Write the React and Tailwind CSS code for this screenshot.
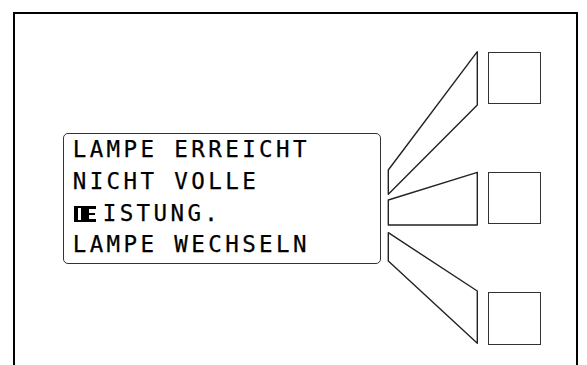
export default function App() {
  return (
    <div className="w-[587px] h-[365px] overflow-hidden bg-white">
      <div className="ml-[13px] mt-[12px] w-[565px] h-[420px] border-2 border-black flex items-start">
        <div className="shrink-0 ml-[47.7px] mt-[118.7px] w-[318.5px] h-[131.6px] border-[1.5px] border-[#333] rounded-[5px] pl-[9px] pt-[0.5px] font-['DejaVu_Sans_Mono',monospace] text-[22.5px] leading-[31.67px] tracking-[3.4px] text-black whitespace-pre [-webkit-text-stroke:0.25px_black]">
          <div>LAMPE ERREICHT</div>
          <div>NICHT VOLLE</div>
          <div className="flex items-center">
            <span className="inline-flex items-center ml-[1px] mr-[7px] mt-[1px]">
              <span className="inline-block w-[11px] h-[15.5px] border-x-[4.5px] border-y-[2px] border-black"></span>
              <span className="inline-block w-[11px] h-[15.5px] border-l-[4px] border-y-[3px] border-black relative">
                <span className="absolute left-0 right-[1px] top-[3.5px] h-[2.5px] bg-black"></span>
              </span>
            </span>
            <span>ISTUNG.</span>
          </div>
          <div>LAMPE WECHSELN</div>
        </div>
        <svg
          className="shrink-0 ml-[4.8px] mt-[36px]"
          width="94"
          height="296"
          viewBox="0 0 94 296"
          fill="none"
          stroke="#222"
          strokeWidth="1.4"
          strokeLinejoin="round"
        >
          <polygon points="2.3,120 91.3,1.7 91.3,55 2.3,144.3" />
          <polygon points="2.3,150 91.3,122.3 91.3,175 2.3,175" />
          <polygon points="2.3,182.7 91.3,241 91.3,293.3 2.3,211" />
        </svg>
        <div className="shrink-0 ml-[7.7px] mt-[37.7px] flex flex-col gap-[67.6px]">
          <div className="w-[53.3px] h-[52.6px] border-[1.5px] border-[#333]"></div>
          <div className="w-[53.3px] h-[52.6px] border-[1.5px] border-[#333]"></div>
          <div className="w-[53.3px] h-[52.6px] border-[1.5px] border-[#333]"></div>
        </div>
      </div>
    </div>
  );
}
